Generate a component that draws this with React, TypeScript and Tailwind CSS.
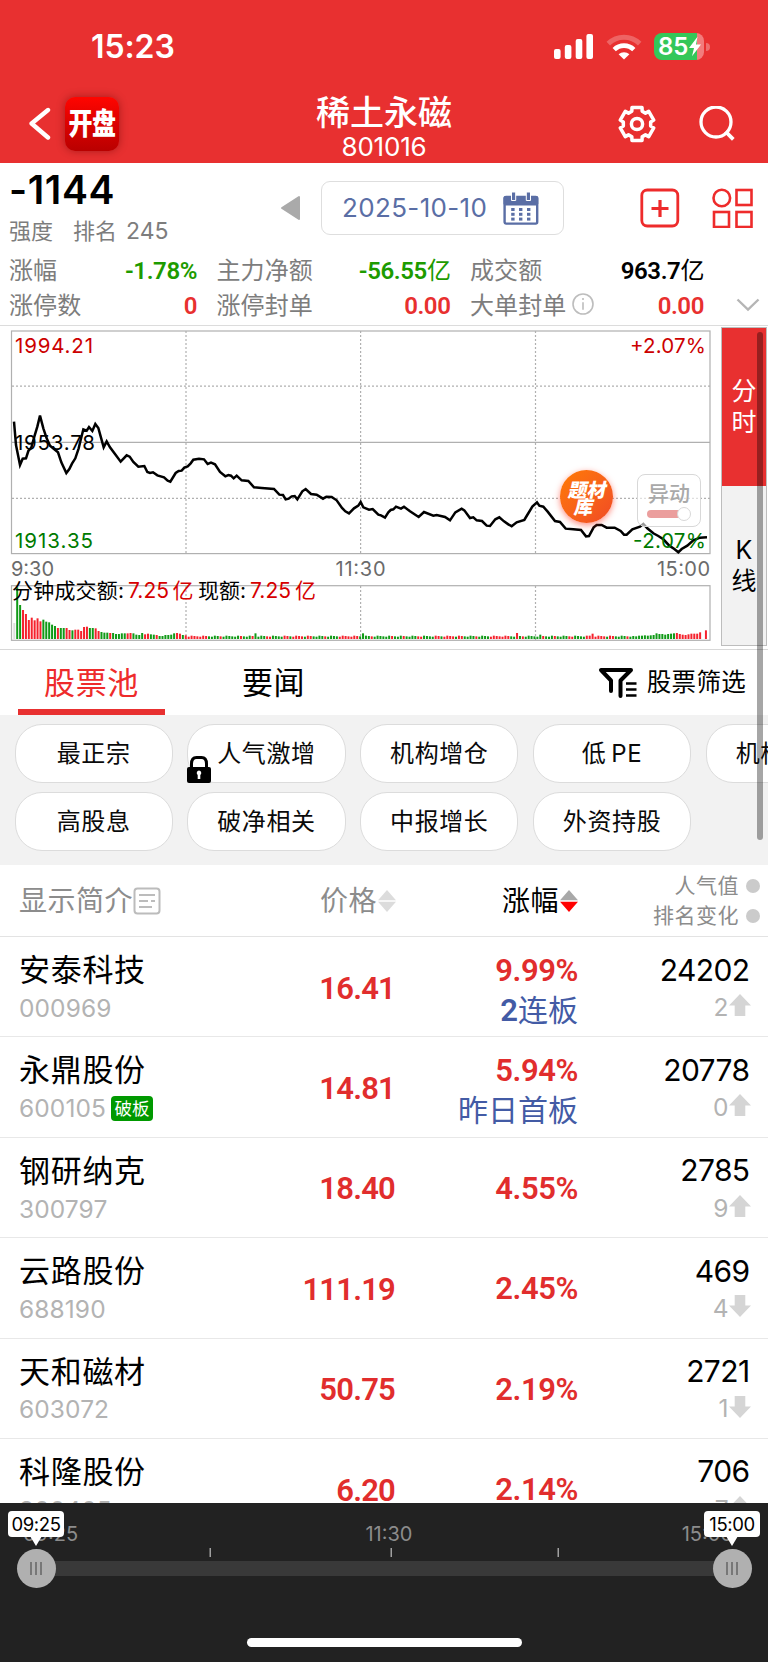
import { clsx } from "clsx";

interface Stock {
  name: string;
  code: string;
  price: string;
  change: string;
  heat: string;
  move: string;
  up: boolean;
  badge?: string;
  tag?: React.ReactNode;
}

const stocks: Stock[] = [
  {
    name: "安泰科技",
    code: "000969",
    price: "16.41",
    change: "9.99%",
    heat: "24202",
    move: "2",
    up: true,
    tag: (
      <>
        <b className="font-['Roboto'] text-[31px] font-semibold">2</b>连板
      </>
    ),
  },
  { name: "永鼎股份", code: "600105", price: "14.81", change: "5.94%", heat: "20778", move: "0", up: true, badge: "破板", tag: "昨日首板" },
  { name: "钢研纳克", code: "300797", price: "18.40", change: "4.55%", heat: "2785", move: "9", up: true },
  { name: "云路股份", code: "688190", price: "111.19", change: "2.45%", heat: "469", move: "4", up: false },
  { name: "天和磁材", code: "603072", price: "50.75", change: "2.19%", heat: "2721", move: "1", up: false },
  { name: "科隆股份", code: "300405", price: "6.20", change: "2.14%", heat: "706", move: "7", up: true },
];

const chips = [
  ["最正宗", "人气激增", "机构增仓", "低\u2009PE", "机构减仓"],
  ["高股息", "破净相关", "中报增长", "外资持股"],
];

// price line, in thirds of a pixel
const pricePoints =
  "42,290 48,360 60,420 68,401 78,400 85,378 94,368 103,335 112,305 120,272 130,310 140,340 150,362 162,372 174,382 184,412 199,444 208,432 216,416 226,400 236,370 242,345 250,313 260,317 267,306 277,318 286,297 295,309 303,338 311,367 320,349 330,367 345,387 362,410 380,391 389,395 400,411 415,425 433,423 442,441 450,444 459,442 472,451 492,457 503,467 511,470 527,444 536,438 545,437 553,428 563,424 572,415 580,404 597,401 612,403 623,417 633,413 645,418 660,441 676,454 685,450 693,452 701,460 710,452 725,466 745,468 762,487 785,489 822,492 838,509 849,510 857,523 866,521 875,514 884,513 892,523 907,499 917,492 933,507 950,509 969,521 979,515 995,516 1010,526 1026,549 1036,559 1047,565 1062,550 1075,542 1082,531 1090,547 1107,554 1118,552 1135,569 1143,571 1155,578 1165,562 1172,555 1180,553 1188,545 1203,551 1212,545 1230,559 1256,576 1272,561 1300,572 1310,570 1335,576 1350,586 1366,562 1385,551 1393,556 1410,579 1420,577 1430,586 1446,588 1460,602 1470,603 1486,583 1498,577 1512,589 1525,598 1535,604 1550,592 1573,585 1580,573 1597,545 1611,532 1618,542 1630,545 1643,560 1665,588 1680,591 1697,611 1720,613 1743,615 1758,634 1767,633 1781,607 1790,600 1805,600 1820,608 1844,608 1862,618 1872,629 1880,629 1897,613 1920,605 1930,597 1942,610 1960,625 1975,633 1990,643 2008,662 2023,672 2035,682 2045,672 2062,662 2080,646 2100,638 2121,637";

const volumeHead =
  "w48 g155 g102 r87 r75 r57 r64 r56 r62 r53 g58 g52 g50 g43 g39 r33 g33 g33 r33 r27 g26 r28 r28 r24 r36 r37 g33 g33 r32 r24 g21 g19 g19 r18 g18 g15 g15 g17 g17 r17 r18 g17 g13 g12 g18 r14 r16 g14 g13 r12 g9 g9 g12 g12 g13 g17 r18 r16 g12 r11".split(" ");
const volumeTail =
  "g9 g8 g10 g10 g11 g10 g11 g12 g17 g15 g15 g13 g15 g16 g17 r18 r15 r13 r12 r14 r16 r16 r16 r20 w0 r26".split(" ");
const volumeRuns = "rrrrrrrggggrggggggrgggrggggrrggggrrgrrrrgrrggggrgggg";
const volumeSpikes: Record<number, string> = { 83: "g17", 120: "g17", 173: "r18", 181: "g13", 198: "r10", 199: "r16" };
const volumeBars = Array.from({ length: 239 }, (_, i) => {
  if (i < volumeHead.length) return volumeHead[i];
  if (i >= 239 - volumeTail.length) return volumeTail[i - 239 + volumeTail.length];
  return volumeSpikes[i] ?? volumeRuns[(i - 60) % volumeRuns.length] + (7 + ((i * 7) % 4));
});
const barColors: Record<string, string> = { r: "#f5222d", g: "#109a17", w: "#dddddd" };

const gearPath =
  "M" +
  [90, 30, -30, -90, -150, -210]
    .flatMap((a) => [
      [a + 22, 13.8],
      [a + 17, 17.2],
      [a - 17, 17.2],
      [a - 22, 13.8],
    ])
    .map(([a, r]) => {
      const t = (a * Math.PI) / 180;
      return `${(20 + r * Math.cos(t)).toFixed(2)} ${(20 - r * Math.sin(t)).toFixed(2)}`;
    })
    .join("L") +
  "Z";

function StatusBar() {
  return (
    <div className="flex h-[92px] items-center justify-between pt-px pr-[58px] pl-[91px]">
      <span className="text-[32px] leading-none font-semibold tracking-[-0.1px]">15:23</span>
      <div className="flex items-center">
        <svg width="39" height="25" viewBox="0 0 39 25" fill="white">
          <rect x="0" y="15" width="6.6" height="10" rx="2" />
          <rect x="10.8" y="11" width="6.6" height="14" rx="2" />
          <rect x="21.7" y="5" width="6.6" height="20" rx="2" />
          <rect x="32.4" y="0" width="6.6" height="25" rx="2" />
        </svg>
        <svg className="ml-[13px]" width="36" height="26" viewBox="0 0 36 26" fill="none">
          <path d="M2.3 9.6a22.5 22.5 0 0 1 31.4 0" stroke="white" strokeOpacity=".25" strokeWidth="5" />
          <path d="M8.2 15.6a14 14 0 0 1 19.6 0" stroke="white" strokeWidth="4.6" />
          <path d="M12.6 20.3a7.8 7.8 0 0 1 10.8 0L18 25.5z" fill="white" />
        </svg>
        <div className="ml-3 flex h-[27px] w-[50px] items-center rounded-lg bg-[linear-gradient(90deg,#34c759_86%,#f27c7c_86%)] pl-[4px]">
          <span className="text-[24px] leading-none font-semibold">85</span>
          <svg width="14" height="21" viewBox="0 0 14 21" fill="white">
            <path d="M9.5 0.8 1 12h5L4 20.2 13 8.6H8z" />
          </svg>
        </div>
        <div className="ml-0.5 h-2 w-1 rounded-r-full bg-white/30" />
      </div>
    </div>
  );
}

function NavBar() {
  return (
    <div className="grid h-[71px] grid-cols-[1fr_auto_1fr]">
      <div className="flex h-16 items-center pl-[28px]">
        <svg width="24" height="34" viewBox="0 0 24 34" fill="none" stroke="white" strokeWidth="4.4" strokeLinecap="round" strokeLinejoin="round">
          <path d="M20 3 3.6 16.5 20 30.5" />
        </svg>
        <div className="ml-[13px] flex size-[54px] items-center justify-center rounded-[10px] bg-linear-to-b from-[#ff0500] to-[#b90000] shadow-[0_0_8px_rgba(90,0,0,0.45)]">
          <span className="scale-y-[1.22] text-[24px] leading-none font-black tracking-[-0.5px]">开盘</span>
        </div>
      </div>
      <div className="flex flex-col items-center">
        <h1 className="mt-1 text-[34px] leading-[34px] font-medium">稀土永磁</h1>
        <p className="mt-[4px] text-[26px] leading-[26px] tracking-[-0.2px]">801016</p>
      </div>
      <div className="flex h-16 items-center justify-end pr-[33px]">
        <svg width="40" height="40" viewBox="0 0 40 40" fill="none" stroke="white" strokeWidth="3.5" strokeLinejoin="round">
          <path d={gearPath} />
          <circle cx="20" cy="20" r="5.6" />
        </svg>
        <svg className="ml-[42px]" width="36" height="36" viewBox="0 0 36 36" fill="none" stroke="white" strokeWidth="3.3">
          <circle cx="17" cy="16" r="15" />
          <path d="M26.5 25.5 34.3 33.3" strokeWidth="3.8" />
        </svg>
      </div>
    </div>
  );
}

function Stat({ label, value, unit, color, info }: { label: string; value: string; unit?: string; color: string; info?: boolean }) {
  return (
    <div className="flex items-center justify-between">
      <span className="flex items-center text-[24px] leading-none tracking-[0.1px] text-[#7d7d7d]">
        {label}
        {info && (
          <svg className="ml-[6px] -mt-1" width="22" height="22" viewBox="0 0 22 22" fill="none" stroke="#bdbdbd" strokeWidth="1.6">
            <circle cx="11" cy="11" r="10" />
            <path d="M11 9.2v7.5M11 5v2" />
          </svg>
        )}
      </span>
      <span className={clsx("font-['Roboto','Noto_Sans_CJK_SC',sans-serif] text-[24px] leading-none font-semibold tracking-[-0.4px]", color)}>
        {value}
        {unit && <span className="font-normal">{unit}</span>}
      </span>
    </div>
  );
}

function Summary() {
  return (
    <section className="h-[163px] border-b border-[#dcdcdc]">
      <div className="flex h-[90px] items-center">
        <div className="flex h-full w-[270px] flex-col pl-[9px]">
          <span className="text-[39px] leading-[54px] font-semibold tracking-[0.6px]">-1144</span>
          <span className="text-[22px] leading-[28px] text-[#7d7d7d]">
            强度<span className="ml-5">排名</span>
            <span className="ml-[9px] text-[23px]">245</span>
          </span>
        </div>
        <svg className="ml-[10px]" width="22" height="26" viewBox="0 0 22 26" fill="#aaa" stroke="#aaa" strokeWidth="2" strokeLinejoin="round">
          <path d="M19 2v22L2 13z" />
        </svg>
        <div className="ml-[19px] flex h-[54px] w-[243px] items-center rounded-[9px] border border-[#dedede] pl-[20px] text-[#5a6ea5]">
          <span className="w-[147px] text-[26px] leading-none tracking-[0.35px] whitespace-nowrap">2025-10-10</span>
          <svg className="ml-[14px]" width="36" height="33" viewBox="0 0 36 33" fill="#5a6ea5">
            <rect x="1.6" y="5" width="32.6" height="26.6" rx="1.5" fill="none" stroke="#5a6ea5" strokeWidth="2.4" />
            <rect x="0.5" y="4" width="34.8" height="9.5" rx="2" />
            <path d="M8.5 0h4.2v8.5H8.500zM23.300 0h4.200v8.500h-4.200z" stroke="white" strokeWidth="1" />
            {[16, 20.8, 25.6].map((y) => [8.2, 16, 24].map((x) => <rect key={`${x}-${y}`} x={x} y={y} width="3.4" height="3" />))}
          </svg>
        </div>
        <svg className="ml-[75px]" width="42" height="40" viewBox="0 0 42 40" fill="none" stroke="#ee2b2b" strokeWidth="2.8">
          <rect x="2.8" y="2" width="36" height="36" rx="5.500" />
          <path d="M12.500 20.500h17M21 12v17" strokeWidth="3.200" />
        </svg>
        <svg className="ml-[31px]" width="42" height="40" viewBox="0 0 42 40" fill="none" stroke="#ee2b2b" strokeWidth="2.6">
          <circle cx="9.8" cy="10" r="8.3" />
          <rect x="24.500" y="2" width="15" height="15" />
          <rect x="2" y="24" width="15" height="15" />
          <rect x="24.500" y="24" width="15" height="15" />
        </svg>
      </div>
      <div className="flex">
        <div className="grid w-[694px] grid-cols-[188px_234px_234px] grid-rows-[36px_34px] gap-x-[19.500px] pl-[9px]">
          <Stat label="涨幅" value="-1.78%" color="text-[#1d9b00]" />
          <Stat label="主力净额" value="-56.55" unit="亿" color="text-[#1d9b00]" />
          <Stat label="成交额" value="963.7" unit="亿" color="text-black" />
          <Stat label="涨停数" value="0" color="text-[#e8302f]" />
          <Stat label="涨停封单" value="0.00" color="text-[#e8302f]" />
          <Stat label="大单封单" value="0.00" color="text-[#e8302f]" info />
        </div>
        <svg className="mt-[45px] ml-[42px]" width="24" height="14" viewBox="0 0 24 14" fill="none" stroke="#b5b5b5" strokeWidth="2.4">
          <path d="M1.500 1.500 12 11.500 22.500 1.500" />
        </svg>
      </div>
    </section>
  );
}

function Chart() {
  return (
    <section className="relative flex h-[324px] border-b border-[#d8d8d8]">
      <svg width="721" height="323" viewBox="0 0 721 323" fill="none" className="font-['Inter','Noto_Sans_CJK_SC',sans-serif]">
        <g stroke="#b0b0b0" strokeWidth="1.2">
          <rect x="11.500" y="5" width="698.500" height="222.600" />
          <path d="M12 116.300H710" />
          <path d="M12 60.200H710M12 172.400H710M186 5V228M360.600 5V228M535.500 5V228" strokeDasharray="2 2" />
          <rect x="11.500" y="259.700" width="698.500" height="54.600" />
          <path d="M186 260V314M360.600 260V314M535.500 260V314" strokeDasharray="2 2" />
        </g>
        {volumeBars.map((bar, i) => {
          const h = Number(bar.slice(1)) / 3;
          return <rect key={i} x={13.3 + i * 2.906} y={313 - h} width="2" height={h} fill={barColors[bar[0]]} />;
        })}
        <polyline points={pricePoints} transform="translate(0 -1) scale(0.33333)" stroke="black" strokeWidth="7.500" />
        <g fontSize="20.500">
          <text x="15" y="26.800" fill="#cc0000" textLength="78">1994.21</text>
          <text x="15" y="124" fill="black" textLength="80">1953.78</text>
          <text x="15" y="221.800" fill="#007a00" textLength="78">1913.35</text>
          <text x="630" y="26.800" fill="#cc0000" textLength="76">+2.07%</text>
          <text x="633" y="221.800" fill="#007a00" textLength="73">-2.07%</text>
        </g>
        <g fontSize="20" fill="#6b6b6b">
          <text x="11" y="249.700" textLength="43">9:30</text>
          <text x="335.500" y="249.700" textLength="50">11:30</text>
          <text x="657" y="249.700" textLength="53">15:00</text>
        </g>
        <g fontSize="21" fill="black">
          <text x="12" y="272" textLength="112">分钟成交额:</text>
          <text x="128" y="271.800" fill="#d60000" textLength="41">7.25</text>
          <text x="172.500" y="272" fill="#d60000">亿</text>
          <text x="198" y="272" textLength="48">现额:</text>
          <text x="250" y="271.800" fill="#d60000" textLength="41">7.25</text>
          <text x="295" y="272" fill="#d60000">亿</text>
        </g>
      </svg>

      {/* floating buttons over the plot */}
      <div className="absolute top-[144px] left-[560px] flex size-[53px] items-center justify-center rounded-full bg-linear-to-br from-[#ff7a00] to-[#f04a23] shadow-[0_2px_6px_rgba(255,60,40,0.6)]">
        <span className="mt-1 -skew-x-12 text-center text-[19px] leading-[17px] font-black text-white">
          题材
          <br />库
        </span>
      </div>
      <div className="absolute top-[148px] left-[637px] flex h-[53px] w-[64px] flex-col items-center rounded-lg border border-[#d8d8d8] bg-white/60">
        <span className="mt-[8px] text-[21px] leading-[22px] font-medium text-[#a9a9a9]">异动</span>
        <div className="mt-[5px] flex h-2 w-[44px] items-center justify-end">
          <div className="-mr-1 h-2 flex-1 rounded-full bg-[#eb9e9d]" />
          <div className="size-[14px] rounded-full border border-[#d8d8d8] bg-white" />
        </div>
      </div>

      <div className="mt-px flex h-[319px] w-[46px] flex-col border border-[#bdbdbd] text-center text-[25px] leading-[31px]">
        <div className="flex h-[158px] flex-col justify-center bg-[#e83030] text-white">
          <span>分</span>
          <span>时</span>
        </div>
        <div className="flex flex-1 flex-col justify-center bg-[#f2f2f2]">
          <span>K</span>
          <span>线</span>
        </div>
      </div>
      <div className="absolute top-[6px] right-[5px] z-10 h-[508px] w-[6px] rounded-full bg-black/35" />
    </section>
  );
}

function Tabs() {
  return (
    <div className="flex h-[65px] items-stretch">
      <div className="ml-[18px] flex w-[147px] items-center justify-center border-b-[6px] border-[#e83030] pt-[5px] text-[31px] leading-none tracking-[0.6px] text-[#ee2b2b]">股票池</div>
      <div className="ml-[35px] flex w-[147px] items-center justify-center text-[31px] leading-none tracking-[0.4px]">要闻</div>
      <div className="ml-auto flex items-center pr-[22px]">
        <svg width="40" height="32" viewBox="0 0 40 32" fill="none" stroke="black" strokeWidth="4" strokeLinecap="round" strokeLinejoin="round">
          <path d="M13 24V13.500L3 3H33L22.500 13.500V29" />
          <path d="M28 16.500h10.500M28 22.500h10.500M28 28.500h10.500" strokeWidth="2.400" strokeLinecap="butt" />
        </svg>
        <span className="ml-[9px] text-[24.500px] leading-none tracking-[0.300px]">股票筛选</span>
      </div>
    </div>
  );
}

function Chips() {
  return (
    <div className="flex h-[150px] flex-col gap-[9px] overflow-hidden bg-[#f2f2f2] pt-[8.500px]">
      {chips.map((row, r) => (
        <div key={r} className="flex gap-[14.500px] pl-[14.500px]">
          {row.map((chip) => (
            <div
              key={chip}
              className="relative flex h-[59px] w-[158.300px] shrink-0 items-center justify-center rounded-[27px] border border-[#dcdcdc] bg-white pt-px text-[24px] leading-none tracking-[0.600px] text-[#0a0a0a]"
            >
              {chip}
              {chip === "人气激增" && (
                <svg className="absolute -bottom-px -left-px" width="24" height="27" viewBox="0 0 24 27" fill="none">
                  <path d="M4.500 12V8q0-6.500 5-6.500h5q5 0 5 6.500v4" stroke="black" strokeWidth="3" />
                  <rect y="11" width="24" height="16" rx="2" fill="black" />
                  <path d="M12 14.500a2.600 2.600 0 0 1 1.300 4.600V23h-2.600v-3.900A2.600 2.600 0 0 1 12 14.500z" fill="white" />
                </svg>
              )}
            </div>
          ))}
        </div>
      ))}
    </div>
  );
}

function SortArrows({ up, down }: { up: string; down: string }) {
  return (
    <svg className="ml-px" width="18" height="22" viewBox="0 0 18 22">
      <path d="M9 0 18 10.200H0z" fill={up} />
      <path d="M9 22 0 11.800H18z" fill={down} />
    </svg>
  );
}

function TableHead() {
  return (
    <div className="grid h-[72px] grid-cols-[200px_196px_182px_182px] items-center border-b border-[#e3e3e3] pt-px text-[28px] leading-none tracking-[0.500px]">
      <div className="flex items-center pl-[19px] text-[#8c8c8c]">
        显示简介
        <svg width="28" height="28" viewBox="0 0 28 28" fill="none" stroke="#bcbcbc" strokeWidth="2">
          <rect x="1.500" y="1.500" width="25" height="25" rx="3" />
          <path d="M6 8h16M6 14h9M18 14h4M6 20h13" />
        </svg>
      </div>
      <div className="flex items-center justify-end text-[#8c8c8c]">
        价格
        <SortArrows up="#dcdcdc" down="#dcdcdc" />
      </div>
      <div className="flex items-center justify-end">
        涨幅
        <SortArrows up="#a8a8a8" down="#ff0000" />
      </div>
      <div className="flex flex-col items-end text-[21px] leading-[30px] text-[#8c8c8c]">
        {["人气值", "排名变化"].map((label) => (
          <div key={label} className="flex items-center">
            {label}
            <span className="ml-[7px] size-[14px] rounded-full bg-[#cbcbcb]" />
          </div>
        ))}
      </div>
    </div>
  );
}

function StockRow({ stock }: { stock: Stock }) {
  return (
    <div className="grid h-[100.400px] shrink-0 grid-cols-[200px_195px_183px_171.500px] border-b border-[#e8e8e8]">
      <div className="flex flex-col pt-[13px] pl-[19px]">
        <span className="text-[31px] leading-[40px] tracking-[0.700px]">{stock.name}</span>
        <span className="-mt-0.5 flex h-10 items-center text-[24.500px] leading-none tracking-[0.100px] text-[#b3b3b3]">
          {stock.code}
          {stock.badge && (
            <span className="ml-[5px] flex h-[25px] w-[42px] items-center justify-center rounded bg-[#009900] text-[17.500px] leading-none tracking-normal text-white">{stock.badge}</span>
          )}
        </span>
      </div>
      <div className="flex items-center justify-end pt-[3px] font-['Roboto'] text-[31px] leading-none font-semibold tracking-[-0.800px] text-[#e12d2d]">{stock.price}</div>
      <div className={clsx("flex flex-col items-end", stock.tag ? "pt-[13.500px]" : "justify-center pt-[3px]")}>
        <span className="font-['Roboto'] text-[31px] leading-[40px] font-semibold tracking-[-0.400px] text-[#e12d2d]">{stock.change}</span>
        {stock.tag && <span className="-mt-px text-[30px] leading-[40px] text-[#435ba5]">{stock.tag}</span>}
      </div>
      <div className="flex flex-col items-end pt-[12.500px]">
        <span className="text-[30px] leading-[40px] tracking-[-0.600px]">{stock.heat}</span>
        <span className="-mt-[1.500px] flex h-[38px] items-center text-[24.500px] leading-none text-[#b3b3b3]">
          {stock.move}
          <svg className={clsx("mb-1 -mr-px", !stock.up && "rotate-180")} width="22" height="22" viewBox="0 0 22 22" fill="#d5d5d5">
            <path d="M11 0 22 11.500H16.300V22H5.700V11.500H0z" />
          </svg>
        </span>
      </div>
    </div>
  );
}

function Knob({ time }: { time: string }) {
  return (
    <div className="relative flex size-[39px] items-center justify-center gap-[3px] rounded-full bg-[#b0b0b0]">
      {[0, 1, 2].map((i) => (
        <span key={i} className="h-[13px] w-[2px] bg-[#777]" />
      ))}
      <div className="absolute bottom-[51px] left-1/2 flex h-[26px] w-[56px] -translate-x-1/2 items-center justify-center rounded bg-white text-[18.500px] leading-none tracking-[-0.400px] text-black">
        {time}
        <svg className="absolute top-[25px]" width="12" height="10" viewBox="0 0 12 10" fill="white">
          <path d="M0 0H12L6 10z" />
        </svg>
      </div>
    </div>
  );
}

function Timeline() {
  return (
    <footer className="h-[159px] bg-[#222] text-[20px] leading-none text-[#8c8c8c]">
      <div className="flex h-[45px] items-end justify-between pr-[35px] pb-[4px] pl-[23px]">
        <span>09:25</span>
        <span className="ml-[18px]">11:30</span>
        <span>15:00</span>
      </div>
      <svg className="block" width="768" height="10" viewBox="0 0 768 10" fill="#a0a0a0">
        <rect x="209.500" width="1.500" height="9" />
        <rect x="390.500" width="1.500" height="9" />
        <rect x="557.500" width="1.500" height="9" />
      </svg>
      <div className="mt-[3px] flex h-[15px] items-center justify-between bg-[linear-gradient(#393939,#393939)] bg-size-[696px_15px] bg-center bg-no-repeat px-[16.500px]">
        <Knob time="09:25" />
        <Knob time="15:00" />
      </div>
      <div className="mx-auto mt-[62px] h-[9px] w-[275px] rounded-full bg-white" />
    </footer>
  );
}

export default function App() {
  return (
    <div className="flex h-[1662px] w-[768px] flex-col overflow-hidden bg-white font-['Inter','Noto_Sans_CJK_SC',sans-serif] text-black">
      <header className="h-[163px] shrink-0 bg-[#e83030] text-white">
        <StatusBar />
        <NavBar />
      </header>
      <Summary />
      <Chart />
      <Tabs />
      <Chips />
      <TableHead />
      <main className="flex min-h-0 flex-1 flex-col overflow-hidden">
        {stocks.map((stock) => (
          <StockRow key={stock.code} stock={stock} />
        ))}
      </main>
      <Timeline />
    </div>
  );
}
